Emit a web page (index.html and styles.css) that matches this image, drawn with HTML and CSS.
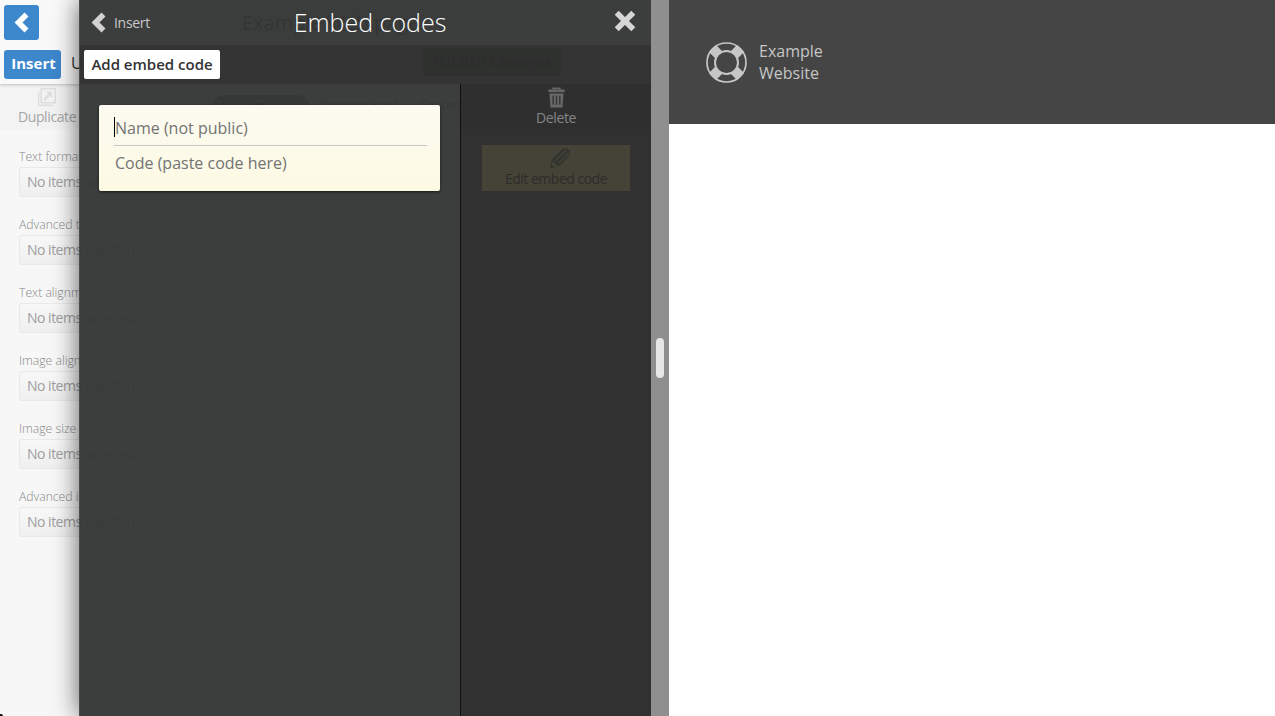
FILE: index.html
```
<!DOCTYPE html>
<html lang="en">
<head>
<meta charset="utf-8">
<title>Embed codes</title>
<link rel="stylesheet" href="styles.css">
</head>
<body>
<div class="app">
  <div class="editor">
    <div class="base">
      <header class="base-head">
        <div class="base-row">
          <button class="back"><svg width="15" height="21" viewBox="0 0 15 21"><path d="M12.5 2.5 4.5 10.5l8 8" fill="none" stroke="#fff" stroke-width="5.6"/></svg></button>
          <div class="page-title">Example Web page</div>
        </div>
        <div class="base-row tabs">
          <span class="tab active">Insert</span>
          <span class="tab">Undo</span>
          <span class="publish">Publish Changes</span>
        </div>
      </header>
      <div class="base-body">
        <aside class="styles-col">
          <div class="duplicate">
            <svg width="18" height="18" viewBox="0 0 18 18" fill="none" stroke="#dfdfdf"><path d="M.7 3.5v13.8H15" stroke-width="1.4"/><path d="M3.2.8h14v14h-14z" stroke-width="1.6"/><path d="m6 12 6-6" stroke-width="2.5"/><path d="M7.5 3.5H14V10z" fill="#dfdfdf" stroke="none"/></svg>
            <span>Duplicate</span>
          </div>
          <div class="field"><label>Text formats</label><div class="select">No items selected</div></div>
          <div class="field"><label>Advanced text styles</label><div class="select">No items selected</div></div>
          <div class="field"><label>Text alignment</label><div class="select">No items selected</div></div>
          <div class="field"><label>Image alignment</label><div class="select">No items selected</div></div>
          <div class="field"><label>Image size</label><div class="select">No items selected</div></div>
          <div class="field"><label>Advanced image styles</label><div class="select">No items selected</div></div>
        </aside>
        <div class="content-tabs">
          <span class="pill">Main Content</span><span class="ctab">Content Bar 1</span><span class="ctab last">Content Bar 2</span>
        </div>
      </div>
    </div>

    <section class="panel">
      <header class="panel-head">
        <div class="crumb">
          <svg width="15" height="21" viewBox="0 0 15 21"><path d="M12.5 2.5 4.5 10.5l8 8" fill="none" stroke="#d2d2d2" stroke-width="5.6"/></svg>
          <span>Insert</span>
        </div>
        <h1>Embed codes</h1>
        <svg class="close" width="22" height="22" viewBox="0 0 22 22"><path d="m2.7 2.7 16.6 16.6M19.3 2.7 2.7 19.3" stroke="#d5d5d5" stroke-width="5.6"/></svg>
      </header>
      <div class="panel-bar"><button class="add">Add embed code</button></div>
      <div class="panel-body">
        <div class="list">
          <form class="card">
            <div class="input"><i class="caret"></i>Name (not public)</div>
            <div class="input">Code (paste code here)</div>
          </form>
        </div>
        <aside class="actions">
          <div class="delete">
            <svg width="17" height="21" viewBox="0 0 17 21" fill="none" stroke="#686868"><path d="M5.2 2.8V1.2h6.6v1.6" stroke-width="1.6"/><path d="M.8 4.7V3h15.4v1.7z" fill="#686868" stroke-width="1"/><path d="M1.5 6.5h14l-1 14h-12z" fill="#686868" stroke="none"/><path d="M5.2 8.8v9M8.5 8.8v9M11.8 8.8v9" stroke="#303030" stroke-width="1.3"/></svg>
            <span>Delete</span>
          </div>
          <div class="edit">
            <svg width="22" height="21" viewBox="0 0 22 21"><path d="M1 20.5 3 11.5 13 1.2 14.5.5h4L21 3v4L11 17.2z" fill="#31342f"/><path d="m6.5 12.8 10-10.2M9.8 15 20 4.8" stroke="#454237" stroke-width="1.5"/><path d="m3.8 13.5 4.8 4-3.8 1.3-1.9-1.9z" fill="#454237"/></svg>
            <span>Edit embed code</span>
          </div>
        </aside>
      </div>
    </section>
    <i class="corner"></i>
  </div>

  <div class="divider"><i class="grip"></i></div>

  <main class="preview">
    <header class="site-head">
      <svg width="42" height="42" viewBox="0 0 42 42" fill="none" stroke="#c6c6c6"><circle cx="20.5" cy="21.5" r="19.5" stroke-width="1.7"/><circle cx="20.5" cy="21.5" r="11.5" stroke-width="2"/><path d="M12.700 13.700 6.500 7.500M28.300 13.700l6.200-6.200M12.700 29.300l-6.200 6.200M28.300 29.300l6.200 6.200" stroke-width="10"/></svg>
      <div class="site-name">Example<br>Website</div>
    </header>
  </main>
</div>
</body>
</html>
```
FILE: styles.css
```
* { box-sizing: border-box; }
body { margin: 0; font-family: "Open Sans", "Noto Sans", sans-serif; color: #333; }
svg { display: block; flex: none; }
button { border: 0; font: inherit; padding: 0; }

.app { display: flex; width: 1275px; height: 716px; overflow: hidden; background: #fff; }
.editor { position: relative; width: 651px; flex: none; overflow: hidden; background: #f7f7f7; }

.base { height: 100%; white-space: nowrap; }
.base-head { height: 84px; padding: 5px 4px 0; background: #f9f9f9; box-shadow: 0 1px 3px rgba(0, 0, 0, .22); position: relative; }
.base-row { display: flex; }
.back { width: 35px; height: 35px; border-radius: 3px; background: #3d87cd; display: flex; align-items: center; justify-content: center; }
.page-title { margin-left: 193px; padding: 0 10px; width: 226px; height: 35px; line-height: 35px; font-size: 20px; font-weight: 400; background: #e6dede; color: #000; }
.tabs { margin-top: 10px; height: 29px; line-height: 27px; font-size: 16px; }
.tab { width: 60px; padding: 0 0 0 10px; }
.tab.active { width: 57px; padding: 0 0 0 2px; text-align: center; background: #3d87cd; color: #fff; font-size: 15px; font-weight: 700; border-radius: 3px; }
.publish { margin: -2px 0 0 302px; width: 138px; height: 28px; text-align: center; background: #987; color: #200; font-size: 15px; font-weight: 600; border-radius: 2px; }

.base-body { display: flex; height: 632px; }
.styles-col { width: 188px; flex: none; }
.duplicate { height: 45px; padding: 4px 0 0 18px; background: #f3f3f3; font-size: 14px; letter-spacing: -.4px; line-height: 20px; color: #a6a6a6; }
.duplicate svg { margin: 0 0 1px 20px; }
.field { height: 68px; padding: 18px 0 0 19px; }
.field label { display: block; height: 20px; line-height: 19px; font-size: 12.2px; font-weight: 300; color: #888; }
.select { width: 151px; height: 30px; padding-left: 7px; line-height: 28px; font-size: 14px; letter-spacing: -.5px; color: #a0a0a0; border: 1px solid #e9e9e9; border-radius: 2px; background: linear-gradient(#f8f8f8, #efefef); }
.content-tabs { padding: 11px 0 0 25px; display: flex; font-size: 14px; line-height: 20px; color: #222; }
.pill { width: 96px; height: 24px; text-align: center; background: #555; color: #bbb; border-radius: 10px 10px 0 0; }
.ctab { margin-left: 11px; font-size: 12.5px; color: #444; }
.ctab.last { margin-left: 18px; }

.panel { position: absolute; left: 79px; top: 0; width: 572px; height: 716px; display: flex; flex-direction: column; background: rgba(53, 55, 54, .965); border-left: 1px solid rgba(255, 255, 255, .08); box-shadow: 0 0 24px rgba(0, 0, 0, .62); }
.panel-head { height: 45px; display: flex; position: relative; padding: 11px 15px 0 11px; justify-content: space-between; }
.crumb { display: flex; gap: 8px; width: 80px; height: 22px; line-height: 24px; font-size: 14px; letter-spacing: -.3px; color: #c8c8c8; }
.crumb svg { margin-top: 1px; }
h1 { margin: -7px 45px 0 0; width: 160px; text-align: center; font-size: 25px; line-height: 36px; font-weight: 300; color: #fff; white-space: nowrap; }
.close { margin-top: -1px; }
.panel-bar { height: 39px; padding: 5px 4px; background: rgba(0, 0, 0, .15); }
.add { display: block; width: 136px; height: 29px; border-radius: 2px; background: #fff; color: #333; font-size: 15px; font-weight: 600; line-height: 26px; padding-bottom: 2px; text-align: center; white-space: nowrap; }
.panel-body { flex: 1; display: flex; }
.list { width: 380px; padding: 21px 19px; }
.card { width: 341px; height: 86px; padding: 6px 13px 0 15px; border-radius: 2px; background: linear-gradient(#fcfbf1, #fdf9e3); box-shadow: 0 1px 3px rgba(0, 0, 0, .6); }
.input { position: relative; height: 35px; padding-left: 1px; line-height: 34px; font-size: 16px; color: #737373; }
.input:first-child { border-bottom: 1px solid #c6c6c6; }
.caret { position: absolute; left: 0; top: 6px; width: 1px; height: 20px; background: #000; }
.actions { flex: 1; border-left: 1px solid #111; background: #313131; }
.delete { height: 45px; padding: 3px 0 0; background: #2f2f2f; display: flex; flex-direction: column; align-items: center; color: #858585; font-size: 14px; letter-spacing: -.4px; line-height: 19px; }
.edit { width: 148px; height: 46px; margin: 16px 0 0 21px; padding-top: 3px; display: flex; flex-direction: column; align-items: center; background: #454237; color: #2b2d2b; font-size: 14px; letter-spacing: -.5px; line-height: 19px; }
.edit svg { margin: 0 0 0 8px; }
.corner { position: absolute; left: 0; bottom: 0; width: 3px; height: 2px; background: #111; border-radius: 0 3px 0 0; }

.divider { width: 18px; flex: none; background: #8f8f8f; display: flex; align-items: center; justify-content: center; }
.grip { width: 8px; height: 40px; border-radius: 4px; background: #e6e6e6; }

.preview { flex: 1; background: #fff; }
.site-head { height: 124px; padding: 41px 0 0 37px; display: flex; gap: 11px; background: #454545; }
.site-name { margin-top: -1px; font-size: 16px; line-height: 22px; color: #c6c6c6; }
```
